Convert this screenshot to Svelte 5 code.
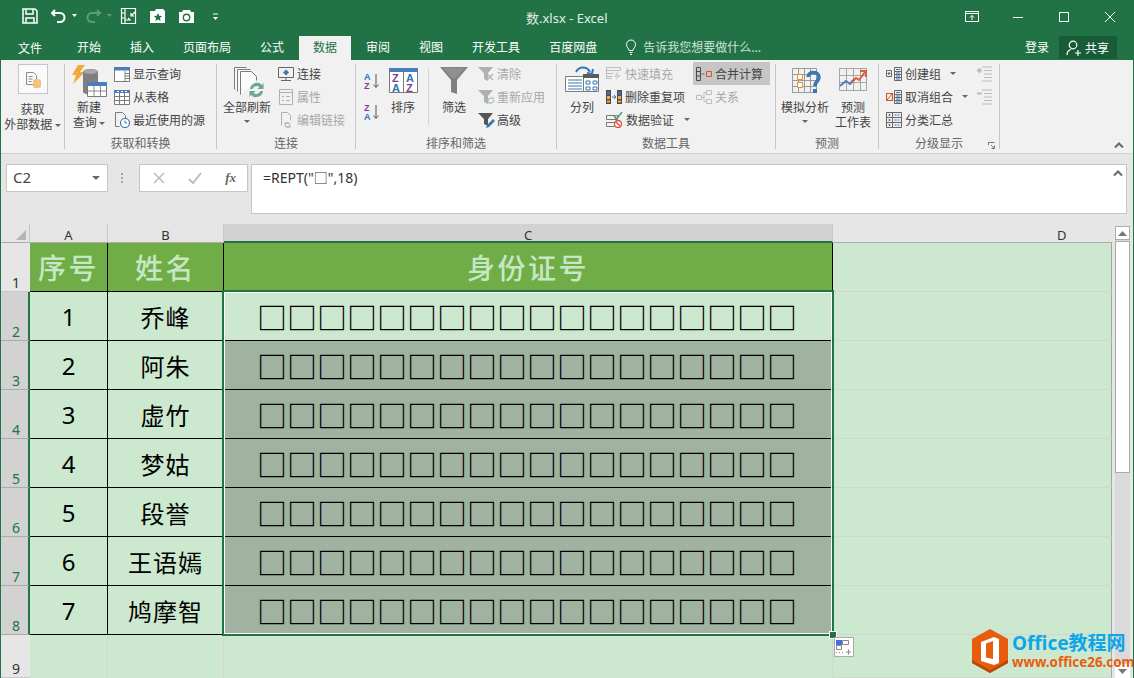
<script>
  const tabs = ["开始", "插入", "页面布局", "公式", "数据", "审阅", "视图", "开发工具", "百度网盘"];
  const people = ["乔峰", "阿朱", "虚竹", "梦姑", "段誉", "王语嫣", "鸠摩智"];
  const boxes = "□".repeat(18);
</script>

<div class="app">
  <header class="titlebar">
    <svg class="qat" width="200" height="20" viewBox="0 0 200 20" fill="none" stroke="#fff" stroke-width="1.5">
      <path d="M1 2h12l2 2v12H1zM4 2v5h7V2M4 16v-5h8v5" />
      <path d="M33 3l-3 3 3 3M30 6h8a4.500 4.500 0 0 1 0 9h-3" stroke-width="2" />
      <path d="M50 7h5l-2.500 3z" fill="#fff" stroke="none" />
      <path d="M75 3l3 3-3 3M78 6h-8a4.500 4.500 0 0 0 0 9h3" stroke="#5f9a7e" stroke-width="2" />
      <path d="M85 7h5l-2.500 3z" fill="#5f9a7e" stroke="none" />
      <path d="M99.500 1.500h14v15h-14zM103 1.500v15M99.500 6h4M99.500 11h4M113 5l-4 4M109 6v3h3M103 13h5l-2-2" stroke-width="1.200" />
      <path d="M128 4h5l1-2h7l2 2v12h-15z" fill="#fff" stroke="none" />
      <path d="M136 6l1.200 2.800 3 .2-2.300 2 .8 3-2.700-1.600-2.700 1.600.8-3-2.300-2 3-.2z" fill="#217346" stroke="none" />
      <path d="M157 5h3l1-2h7l1 2h3v11h-15z" fill="#fff" stroke="none" />
      <circle cx="164.500" cy="10.500" r="3.200" stroke="#217346" stroke-width="1.400" />
      <path d="M191 7h5" stroke-width="1" /><path d="M191 10h5l-2.500 3z" fill="#fff" stroke="none" />
    </svg>
    <div class="doc-title">数.xlsx - Excel</div>
    <svg class="winctl" width="152" height="16" viewBox="0 0 152 16" fill="none" stroke="#fff" stroke-width="1">
      <path d="M.500 2.500h13v10h-13zM.500 4.500h13M7 11V6.500M5 8.500l2-2 2 2" />
      <path d="M48 8.500h10" />
      <path d="M94.500 3.500h9v9h-9z" />
      <path d="M140 3l10 10M150 3l-10 10" />
    </svg>
  </header>

  <nav class="tabs">
    <div class="tab tab--file">文件</div>
    {#each tabs as t}
      <div class="tab" class:tab--active={t === "数据"}>{t}</div>
    {/each}
    <svg class="bulb" width="14" height="16" viewBox="0 0 14 16" fill="none" stroke="#fff" stroke-width="1">
      <path d="M5 11.500c0-2-2.500-3-2.500-6a4.500 4.500 0 0 1 9 0c0 3-2.500 4-2.500 6zM5.500 13.500h3M6 15.500h2" />
    </svg>
    <div class="tell">告诉我您想要做什么...</div>
    <div class="login">登录</div>
    <div class="share">
      <svg width="16" height="16" viewBox="0 0 16 16" fill="none" stroke="#fff" stroke-width="1.200">
        <circle cx="7" cy="5" r="3.800" /><path d="M1 15c0-3 2-5 4-5.500M9 13h6M12 10v6" />
      </svg>
      共享
    </div>
  </nav>

  <section class="ribbon">
    <div class="group" style="width:64px">
      <div class="body">
        <div class="big" style="width:63px">
          <div class="getbox">
            <svg width="16" height="17" viewBox="0 0 16 17" fill="none" stroke="#8a8a8a">
              <path d="M1.500 1.500h7l3 3v9h-10zM3.500 5.500h4M3.500 8h4M3.500 10.500h3" />
              <path d="M8 9.500c0-2 8-2 8 0v6c0 2-8 2-8 0z" fill="#f3c27e" stroke="none" />
            </svg>
          </div>
          <span>获取</span><span class="wide">外部数据 <i class="caret"></i></span>
        </div>
      </div>
      <div class="label"></div>
    </div>

    <div class="group" style="width:152px">
      <div class="body">
        <div class="big" style="width:48px">
          <svg class="bigicon" width="38" height="35" viewBox="0 0 38 35">
            <path d="M8 2h7l-5 7h5L3 21l3-9H2z" fill="#f2a93b" />
            <path d="M13 9c0-4 15-4 15 0v20c0 3-15 3-15 0z" fill="#7f7f7f" />
            <ellipse cx="20.500" cy="8.500" rx="7" ry="2.500" fill="#a6a6a6" />
            <path d="M17.500 19.500h19v14h-19z" fill="#fff" stroke="#7a7a7a" />
            <path d="M17 19h20v4H17z" fill="#4a7ebb" />
            <path d="M24 23v10M30.500 23v10M18 28h18" stroke="#8a8a8a" />
          </svg>
          <span>新建</span><span class="wide">查询 <i class="caret"></i></span>
        </div>
        <div class="col" style="margin-left:1px">
          <div class="row">
            <svg width="16" height="16" viewBox="0 0 16 16" fill="none" stroke="#7a7a7a"><path d="M.500 1.500h15v14H.500z" fill="#fff" /><path d="M0 1h16v3.500H0z" fill="#4a7ebb" stroke="none" /><path d="M11 5v10M11.500 7.500h4M11.500 10h4M11.500 12.500h4" /></svg>
            显示查询
          </div>
          <div class="row">
            <svg width="16" height="16" viewBox="0 0 16 16" fill="none" stroke="#7a7a7a"><path d="M.500 1.500h15v14H.500zM5.500 4v11M10.500 4v11M1 7.500h14M1 11.500h14" fill="#fff" /><path d="M0 1h16v3H0z" fill="#4a7ebb" stroke="none" /><path d="M3 2.500h2M7 2.500h2M11 2.500h2" stroke="#fff" /></svg>
            从表格
          </div>
          <div class="row">
            <svg width="16" height="16" viewBox="0 0 16 16" fill="none" stroke="#7a7a7a"><path d="M1.500 14.500v-14h7l3 3v3M1.500 14.500h4" /><circle cx="11" cy="11" r="4.500" fill="#fff" stroke="#3a76b5" stroke-width="1.200" /><path d="M11 8.500V11h2" stroke="#3a76b5" /></svg>
            最近使用的源
          </div>
        </div>
      </div>
      <div class="label">获取和转换</div>
    </div>

    <div class="group" style="width:139px">
      <div class="body">
        <div class="big" style="width:60px">
          <svg class="bigicon" width="38" height="35" viewBox="0 0 38 35" fill="none" stroke="#7a7a7a">
            <path d="M6.500 26.500v-22h12M9.500 28.500v-22h13M12.500 31.500v-23h11l5 5v4" fill="#fafafa" />
            <path d="M22 26a7 7 0 0 1 12-4l1.500-2v6h-6l2-2a4.500 4.500 0 0 0-7 2zM35 28a7 7 0 0 1-12 4l-1.500 2v-6h6l-2 2a4.500 4.500 0 0 0 7-2z" fill="#6fa68f" stroke="none" />
          </svg>
          <span class="wide">全部刷新</span><i class="caret solo"></i>
        </div>
        <div class="col" style="margin-left:1px">
          <div class="row">
            <svg width="16" height="16" viewBox="0 0 16 16" fill="none" stroke="#666"><path d="M.500 1.500h15v10H.500zM3 14.500h10" /><path d="M8 3.500l3 3-3 3-3-3z" fill="#3a76b5" stroke="none" /><path d="M8 11.500v3" /></svg>
            连接
          </div>
          <div class="row off">
            <svg width="16" height="16" viewBox="0 0 16 16" fill="none" stroke="#b0b0b0"><path d="M1.500 .5h13v15h-13zM1.500 3.500h13M4 7.500h2M8 7.500h4M4 11.500h2M8 11.500h4" /></svg>
            属性
          </div>
          <div class="row off">
            <svg width="16" height="16" viewBox="0 0 16 16" fill="none" stroke="#b0b0b0"><path d="M3.500 13.500v-13h6l3 3v5" /><path d="M6 11h4a2 2 0 0 1 0 4H8M13 15H9a2 2 0 0 1 0-4h2" /></svg>
            编辑链接
          </div>
        </div>
      </div>
      <div class="label">连接</div>
    </div>

    <div class="group" style="width:201px">
      <div class="body">
        <div class="sortcol">
          <svg width="16" height="18" viewBox="0 0 16 18"><text x="0" y="7.500" class="az blue">A</text><text x="0" y="16.500" class="az purple">Z</text><path d="M12 2v13M9.500 12.500l2.500 3 2.500-3" fill="none" stroke="#555" /></svg>
          <svg width="16" height="18" viewBox="0 0 16 18"><text x="0" y="7.500" class="az purple">Z</text><text x="0" y="16.500" class="az blue">A</text><path d="M12 2v13M9.500 12.500l2.500 3 2.500-3" fill="none" stroke="#555" /></svg>
        </div>
        <div class="big" style="width:46px">
          <svg class="bigicon" width="32" height="35" viewBox="0 0 32 35">
            <path d="M2.500 5.500h28v24h-28zM16.500 9v21" fill="#fff" stroke="#7a7a7a" />
            <path d="M2 5h29v4H2z" fill="#4a7ebb" />
            <text x="5" y="19" class="az2 purple">Z</text><text x="5" y="29" class="az2 blue">A</text>
            <text x="19" y="19" class="az2 blue">A</text><text x="19" y="29" class="az2 purple">Z</text>
          </svg>
          <span>排序</span>
        </div>
        <div class="vsep"></div>
        <div class="big" style="width:50px">
          <svg class="bigicon" width="30" height="35" viewBox="0 0 30 35">
            <path d="M1 4h28L18 17v14l-6 -2V17z" fill="#808080" />
            <path d="M4 5h22l-9 10h-4z" fill="#8f8f8f" />
          </svg>
          <span>筛选</span>
        </div>
        <div class="col col--tight" style="margin-left:-1px">
          <div class="row off">
            <svg width="17" height="16" viewBox="0 0 17 16"><path d="M0 1h15l-5 6v8l-4-2V7z" fill="#b0b0b0" /><path d="M9 8l6 6M15 8l-6 6" stroke="#b7b7b7" stroke-width="1.500" /></svg>
            清除
          </div>
          <div class="row off">
            <svg width="17" height="16" viewBox="0 0 17 16"><path d="M0 1h15l-5 6v8l-4-2V7z" fill="#b0b0b0" /><path d="M10 12a3.500 3.500 0 0 1 6-2M16 11a3.500 3.500 0 0 1-6 2" fill="none" stroke="#a9c4b8" stroke-width="1.300" /></svg>
            重新应用
          </div>
          <div class="row">
            <svg width="17" height="16" viewBox="0 0 17 16"><path d="M0 1h15l-5 6v7l-4-2V7z" fill="#555" /><path d="M15 7l2 2-6 6-3 1 1-3z" fill="#3a76b5" /></svg>
            高级
          </div>
        </div>
      </div>
      <div class="label">排序和筛选</div>
    </div>

    <div class="group" style="width:219px">
      <div class="body">
        <div class="big" style="width:50px">
          <svg class="bigicon" width="36" height="35" viewBox="0 0 36 35" fill="none">
            <path d="M1.500 13.500h19v15h-19z" fill="#fff" stroke="#7a7a7a" />
            <path d="M4 17h14M4 20h14M4 23h14M4 26h14" stroke="#3a76b5" />
            <path d="M19.500 11.500h15v17h-15z" fill="#fff" stroke="#7a7a7a" />
            <path d="M19 11h16v4H19z" fill="#5a5a5a" /><path d="M22 18h4v3h-4zM29 18h4v3h-4zM22 24h4v3h-4zM29 24h4v3h-4z" stroke="#3a76b5" />
            <path d="M12 9c3-6 11-6 14 0" stroke="#3a76b5" stroke-width="2" /><path d="M23 10l5 1 1-5" stroke="#3a76b5" stroke-width="2" />
          </svg>
          <span>分列</span>
        </div>
        <div class="col" style="width:87px;margin-left:-1px">
          <div class="row off">
            <svg width="16" height="16" viewBox="0 0 16 16" fill="none" stroke="#bdbdbd"><path d="M.500 1.500h14v3H.500zM.500 4.500h8M.500 7.500h7M.500 10.500h6M.500 1.500v11h5" /><path d="M12 5l-4 6h3l-2 4 6-6h-3z" fill="#cfcfcf" stroke="none" /></svg>
            快速填充
          </div>
          <div class="row">
            <svg width="16" height="16" viewBox="0 0 16 16"><path d="M0 1h5v14H0zM11 1h5v14h-5z" fill="#4d4d4d" /><path d="M1 2.500h3v3H1zM12 2.500h3v3h-3z" fill="#3a76b5" /><path d="M1 7h3v3H1zM12 7h3v3h-3z" fill="#f0b044" /><path d="M1 11.500h3v2H1zM12 11.500h3v2h-3z" fill="#f0b044" /><path d="M6 8h3M8 6l2 2-2 2" stroke="#3a76b5" fill="none" /></svg>
            删除重复项
          </div>
          <div class="row">
            <svg width="17" height="16" viewBox="0 0 17 16" fill="none"><path d="M.500 3.500h11v4H.500zM.500 10.500h8v4h-8z" stroke="#7a7a7a" /><path d="M8 4l2.500 3L16 0" stroke="#4d9a7c" stroke-width="1.500" /><circle cx="12" cy="12" r="3.500" fill="#fff" stroke="#d9502c" stroke-width="1.300" /><path d="M9.500 9.500l5 5" stroke="#d9502c" stroke-width="1.300" /></svg>
            数据验证 <i class="caret" style="margin-left:7px"></i>
          </div>
        </div>
        <div class="col">
          <div class="row row--on">
            <svg width="16" height="16" viewBox="0 0 16 16" fill="none"><path d="M.500 1.500h4v13h-4zM.500 5.500h4M.500 10h4" stroke="#4d4d4d" /><path d="M5.500 8h3" stroke="#3a76b5" /><path d="M10.500 5.500h5v5h-5z" stroke="#d9502c" /></svg>
            合并计算
          </div>
          <div class="row off row--pad">
            <svg width="16" height="16" viewBox="0 0 16 16" fill="none" stroke="#bdbdbd"><path d="M.500 6.500h5v4h-5zM10.500 1.500h5v4h-5zM10.500 10.500h5v4h-5zM5.500 8.500H8V3.500h2.500M8 8.500v4h2.500" /></svg>
            关系
          </div>
        </div>
      </div>
      <div class="label">数据工具</div>
    </div>

    <div class="group" style="width:103px">
      <div class="body">
        <div class="big" style="width:58px">
          <svg class="bigicon" width="32" height="35" viewBox="0 0 32 35" fill="none">
            <path d="M3.500 5.500h24v24h-24zM9.500 5v24M15.500 5v24M21.500 5v24M3 11.500h24M3 17.500h24M3 23.500h24" stroke="#9a9a9a" />
            <path d="M8.500 11.500h5v5h-5zM8.500 19.500h5v5h-5z" fill="#fff" stroke="#e88f2d" />
            <path d="M19 14c0-6 11-6 11 0 0 4-4 4-4 9" stroke="#3a76b5" stroke-width="3.600" /><path d="M24 26h4v4h-4z" fill="#3a76b5" />
          </svg>
          <span class="wide">模拟分析</span><i class="caret solo"></i>
        </div>
        <div class="big" style="width:38px">
          <svg class="bigicon" width="32" height="35" viewBox="0 0 32 35" fill="none">
            <path d="M2.500 5.500h27v22h-27zM9.500 5v22M16.500 5v22M23.500 5v22M2 12.500h27M2 19.500h27" stroke="#a6a6a6" />
            <path d="M3 23l6-5 4 3 5-5" stroke="#4a7ebb" stroke-width="2" /><path d="M14 19l5-4 3 2 6-8" stroke="#d9603c" stroke-width="2" /><path d="M23 8h6v6" stroke="#d9603c" stroke-width="2" />
          </svg>
          <span>预测</span><span class="wide">工作表</span>
        </div>
      </div>
      <div class="label">预测</div>
    </div>

    <div class="group" style="width:121px">
      <div class="body">
        <div class="col" style="width:91px;margin-left:7px">
          <div class="row">
            <svg width="16" height="16" viewBox="0 0 16 16" fill="none"><path d="M.500 4.500h5v6h-5zM3 6v3M1.500 7.500h3" stroke="#666" /><path d="M8.500 1.500h7v13h-7zM8.500 5.500h7M8.500 8.500h7M8.500 11.500h7" stroke="#666" /><path d="M10 3.500h4M10 7h4M10 10h4M10 13h4" stroke="#3a76b5" /></svg>
            创建组 <i class="caret" style="margin-left:6px"></i>
          </div>
          <div class="row">
            <svg width="16" height="16" viewBox="0 0 16 16" fill="none"><path d="M.500 4.500h6v7h-6z" stroke="#d9502c" stroke-width="1.200" /><path d="M1 11l5-6" stroke="#d9502c" /><path d="M8.500 1.500h7v13h-7zM8.500 5.500h7M8.500 8.500h7M8.500 11.500h7" stroke="#666" /><path d="M10 3.500h4M10 7h4M10 10h4M10 13h4" stroke="#3a76b5" /></svg>
            取消组合 <i class="caret" style="margin-left:6px"></i>
          </div>
          <div class="row">
            <svg width="16" height="16" viewBox="0 0 16 16" fill="none" stroke="#666"><path d="M.500 .5h15v15H.500zM6.500 1v14M1 5.500h14M1 10.500h14M3.500 2v2M2.500 3h2M3.500 7v2M2.500 8h2M3.500 12v2M2.500 13h2" /><path d="M8.500 3h5M8.500 8h5M8.500 13h5" stroke="#3a76b5" stroke-dasharray="2 1" /></svg>
            分类汇总
          </div>
        </div>
        <div class="col">
          <div class="row off">
            <svg width="15" height="16" viewBox="0 0 15 16" fill="none" stroke="#bdbdbd"><path d="M5 1h10M7 4.500h8M7 8h8M7 11.500h8M5 15h10" /><path d="M0 4.500h5M2.500 2v5" stroke-width="2" /></svg>
          </div>
          <div class="row off">
            <svg width="15" height="16" viewBox="0 0 15 16" fill="none" stroke="#bdbdbd"><path d="M5 1h10M7 4.500h8M7 8h8M7 11.500h8M5 15h10" /><path d="M0 4.500h5" stroke-width="2" /></svg>
          </div>
        </div>
      </div>
      <div class="label">分级显示</div>
      <svg class="launcher" width="7" height="7" viewBox="0 0 7 7" fill="none" stroke="#777"><path d="M.500 3V.5H6.500M3 3l3 3M6.500 3.500v3h-3" /></svg>
    </div>

    <svg class="collapse" width="10" height="6" viewBox="0 0 10 6" fill="none" stroke="#666" stroke-width="2"><path d="M1 5.500l4-4 4 4" /></svg>
  </section>

  <section class="formula">
    <div class="namebox"><span class="nametext">C2</span><i class="caret caret--lg"></i></div>
    <svg width="3" height="11" viewBox="0 0 3 11" class="grip"><path d="M0 0h2v2H0zM0 4h2v2H0zM0 8h2v2H0z" fill="#a6a6a6" /></svg>
    <div class="fbtns">
      <svg width="12" height="12" viewBox="0 0 12 12" stroke="#bdbdbd" stroke-width="1.600"><path d="M1 1l10 10M11 1L1 11" /></svg>
      <svg width="14" height="12" viewBox="0 0 14 12" fill="none" stroke="#bdbdbd" stroke-width="2"><path d="M1 7l4 4 8-10" /></svg>
      <span class="fx">fx</span>
    </div>
    <div class="finput">=REPT("□",18)
      <svg class="collapse2" width="10" height="6" viewBox="0 0 10 6" fill="none" stroke="#666" stroke-width="2"><path d="M1 5.500l4-4 4 4" /></svg>
    </div>
  </section>

  <section class="sheet">
    <div class="grid">
      <div class="colhead corner"><svg width="12" height="12" viewBox="0 0 12 12"><path d="M11 1v10H1z" fill="#b4b4b4" /></svg></div>
      <div class="colhead">A</div>
      <div class="colhead">B</div>
      <div class="colhead colhead--sel">C</div>
      <div class="colhead colhead--d">D</div>

      <div class="rowhead">1</div>
      <div class="cell head">序号</div>
      <div class="cell head">姓名</div>
      <div class="cell head">身份证号</div>
      <div class="cell blank"></div>

      {#each people as name, i}
        <div class="rowhead rowhead--sel">{i + 2}</div>
        <div class="cell data num">{i + 1}</div>
        <div class="cell data">{name}</div>
        <div class="cell data boxes" class:picked={i > 0}>{boxes}</div>
        <div class="cell blank"></div>
      {/each}

      <div class="rowhead">9</div>
      <div class="cell empty"></div>
      <div class="cell empty"></div>
      <div class="cell empty"></div>
      <div class="cell blank"></div>

      <div class="selection"><span class="handle"></span></div>
      <div class="quick">
        <svg width="18" height="16" viewBox="0 0 18 16" fill="none">
          <path d="M1 1h6v5H1z" fill="#3f6fe0" /><path d="M7.500 1.500h6v4h-6zM1.500 6.500h5v4h-5z" stroke="#888" />
          <path d="M1 13.500h9" stroke="#888" stroke-dasharray="1 2" /><path d="M11 13h5M13.500 10.500v5" stroke="#888" />
        </svg>
      </div>
    </div>
    <aside class="vscroll">
      <div class="sbtn"><svg width="9" height="5" viewBox="0 0 9 5"><path d="M0 5l4.500-5L9 5z" fill="#777" /></svg></div>
      <div class="thumb"></div>
      <div class="sbtn sbtn--end"><svg width="9" height="5" viewBox="0 0 9 5"><path d="M0 0l4.500 5L9 0z" fill="#777" /></svg></div>
    </aside>
  </section>

  <div class="mark">
    <svg width="38" height="44" viewBox="0 0 38 44">
      <path d="M19 0l18 10v24L19 44 1 34V10z" fill="#e85d0c" />
      <path d="M1 34l18 10 18-10v-3L19 41 1 31z" fill="#b8480a" />
      <path d="M10 13l13-5 5 2v24l-5 2-13-4zM15 14.500v14l7 1.500V12z" fill="#fff" fill-rule="evenodd" />
    </svg>
    <div class="mark-text">
      <div class="mark-a">Office教程网</div>
      <div class="mark-b">www.office26.com</div>
    </div>
  </div>
</div>

<style>
  :global(body) { margin: 0; }
  .app { position: relative; box-sizing: border-box; width: 1134px; height: 678px; overflow: hidden; background: #e6e6e6; border: solid #217346; border-width: 0 1px; font: 12px/15px "Noto Sans CJK SC", "Noto Sans", sans-serif; color: #444; }

  .titlebar { height: 36px; background: #217346; display: flex; align-items: center; color: #fff; position: relative; }
  .qat { margin-left: 21px; margin-top: -3px; }
  .doc-title { position: absolute; left: 525px; top: 10px; font: 13px/17px "Noto Sans", "Noto Sans CJK SC", sans-serif; color: #e4efe9; }
  .winctl { margin-left: auto; margin-right: 16px; margin-top: -3px; }

  .tabs { height: 24px; background: #217346; display: flex; gap: 1px; color: #fff; }
  .tab { padding: 0 14px; line-height: 21px; font-size: 12px; }
  .tab--file { width: 60px; box-sizing: border-box; text-align: center; padding: 1px 0 0; margin-right: 2px; margin-left: -1px; }
  .tab--active { background: #f1f1f1; color: #217346; }
  .bulb { margin: 3px 0 0 12px; }
  .tell { margin-left: 4px; line-height: 21px; color: #cfe3d9; }
  .login { margin-left: auto; line-height: 21px; margin-right: 9px; }
  .share { width: 58px; height: 23px; box-sizing: border-box; padding-left: 7px; margin-right: 16px; background: #185c37; display: flex; align-items: center; gap: 3px; }

  .ribbon { position: relative; height: 94px; box-sizing: border-box; padding: 4px 0; background: #f1f1f1; border-bottom: 1px solid #d2d2d2; display: flex; }
  .group { position: relative; box-sizing: border-box; border-right: 1px solid #c6c6c6; display: flex; flex-direction: column; }
  .body { height: 69px; display: flex; margin-top: -1px; margin-bottom: 1px; }
  .label { height: 16px; line-height: 20px; text-align: center; color: #666; white-space: nowrap; }
  .big { display: flex; flex-direction: column; align-items: center; flex: none; }
  .big span { height: 15px; white-space: nowrap; }
  .bigicon { height: 35px; flex: none; margin-bottom: 1px; }
  .getbox { width: 28px; height: 28px; margin: 1px 0 7px 0; background: #fafafa; border: 1px solid #c6c6c6; display: flex; align-items: center; justify-content: center; }
  .col { display: flex; flex-direction: column; flex: none; margin-top: -1px; }
  .row { height: 23px; display: flex; align-items: center; gap: 3px; white-space: nowrap; }
  .row svg { flex: none; }
  .col--tight .row { gap: 2px; }
  .off { color: #a8a8a8; }
  .row--on { background: #c6c6c6; padding: 0 7px 0 3px; }
  .row--pad { padding-left: 3px; }
  .sortcol { margin-left: 8px; width: 16px; padding-top: 9px; display: flex; flex-direction: column; gap: 13px; flex: none; }
  .vsep { width: 1px; height: 56px; margin: 6px 0 0 2px; background: #d4d4d4; flex: none; }
  .caret { display: inline-block; width: 0; height: 0; border: solid transparent; border-width: 3px 3px 0; border-top-color: #666; vertical-align: middle; }
  .caret--lg { border-width: 4px 4px 0; }
  .caret.solo { margin-top: 6px; }
  .launcher { position: absolute; right: 4px; bottom: 0; }
  .collapse { position: absolute; right: 9px; bottom: 5px; }
  .az { font: 700 9px "Liberation Sans", sans-serif; }
  .az2 { font: 700 11px "Liberation Sans", sans-serif; }
  .blue { fill: #2f75b5; }
  .purple { fill: #7f3f98; }

  .formula { height: 50px; margin-top: 10px; display: flex; align-items: flex-start; }
  .namebox { width: 102px; height: 28px; margin-left: 5px; box-sizing: border-box; padding: 0 7px 0 6px; display: flex; align-items: center; justify-content: space-between; background: #fff; border: 1px solid #c6c6c6; font: 15px "Noto Sans", sans-serif; color: #444; }
  .nametext { margin-top: -2px; }
  .grip { margin: 9px 15px 0 13px; }
  .fbtns { width: 109px; height: 28px; box-sizing: border-box; padding: 0 11px 0 13px; display: flex; align-items: center; justify-content: space-between; background: #fff; border: 1px solid #c6c6c6; }
  .fx { font: italic 700 13px "Liberation Serif", serif; color: #666; }
  .finput { position: relative; flex: 1; height: 50px; margin: 0 6px 0 3px; box-sizing: border-box; padding: 3px 11px; background: #fff; border: 1px solid #c6c6c6; font: 14px/19px "Noto Sans", "Noto Sans CJK SC", sans-serif; color: #333; }
  .collapse2 { position: absolute; right: 3px; top: 5px; }

  .sheet { height: 454px; margin-top: 10px; display: flex; }
  .grid { position: relative; display: grid; grid-template-columns: 29px 78px 116px 609px 279px; grid-template-rows: 19px 49px repeat(7, 49px) 43px; }
  .grid > div { box-sizing: border-box; }
  .colhead { background: #e6e6e6; border-right: 1px solid #c8c8c8; border-bottom: 1px solid #ababab; text-align: center; font: 13px/18px "Noto Sans", sans-serif; color: #333; padding-top: 2px; }
  .corner { padding: 5px 0 0 14px; text-align: left; line-height: 0; }
  .colhead--sel { background: #d2d2d2; border-bottom: 2px solid #217346; }
  .colhead--d { border-right: 0; text-align: left; padding-left: 224px; }
  .rowhead { display: flex; align-items: flex-end; padding: 0 0 0 11px; background: #e6e6e6; border-bottom: 1px solid #c8c8c8; font: 14px/17px "Noto Sans", sans-serif; color: #333; }
  .rowhead--sel { background: #d2d2d2; color: #217346; border-right: 2px solid #217346; border-bottom-color: #ababab; }
  .cell { display: flex; align-items: center; justify-content: center; background: #cce8cf; }
  .head { background: #70ad47; border-right: 1px solid #000; border-bottom: 1px solid #000; color: #c6e7c4; font-size: 28px; font-weight: 500; letter-spacing: 2.500px; }
  .data { border-right: 1px solid #000; border-bottom: 1px solid #000; color: #000; font-size: 24px; letter-spacing: 1px; }
  .num { font-family: "Noto Sans", sans-serif; letter-spacing: 0; }
  .boxes { font-size: 30px; font-weight: 500; letter-spacing: 0; white-space: nowrap; padding-right: 2px; }
  .picked { background: #9fb3a0; }
  .blank { border-right: 1px solid #a6a6a6; border-bottom: 1px solid #d4d4d4; }
  .empty { border-right: 1px solid #d4d4d4; }
  .selection { position: absolute; left: 221px; top: 66px; width: 612px; height: 346px; border: 2px solid #217346; box-shadow: inset 0 0 0 1px #fff; pointer-events: none; }
  .handle { position: absolute; right: -4px; bottom: -4px; width: 6px; height: 6px; background: #217346; outline: 1px solid #fff; }
  .quick { position: absolute; left: 833px; top: 413px; width: 20px; height: 20px; display: flex; align-items: center; justify-content: center; background: #fff; border: 1px solid #ababab; }

  .vscroll { width: 15px; margin-left: 3px; padding-top: 2px; display: flex; flex-direction: column; background: linear-gradient(#e6e6e6 2px, #dadada 2px); }
  .sbtn { height: 14px; box-sizing: border-box; display: flex; align-items: center; justify-content: center; background: #fff; border: 1px solid #ababab; }
  .sbtn--end { margin-top: auto; border: 0; }
  .thumb { height: 232px; margin-top: 1px; box-sizing: border-box; background: #fff; border: 1px solid #ababab; }

  .mark { position: absolute; left: 970px; top: 629px; display: flex; gap: 3px; }
  .mark-text { margin-top: 3px; white-space: nowrap; }
  .mark-a { font: 700 19px/23px "Noto Sans", "Noto Sans CJK SC", sans-serif; color: #0ea5e9; }
  .mark-b { font: 700 13.400px/14px "Noto Sans", sans-serif; color: #e85d0c; }
</style>
